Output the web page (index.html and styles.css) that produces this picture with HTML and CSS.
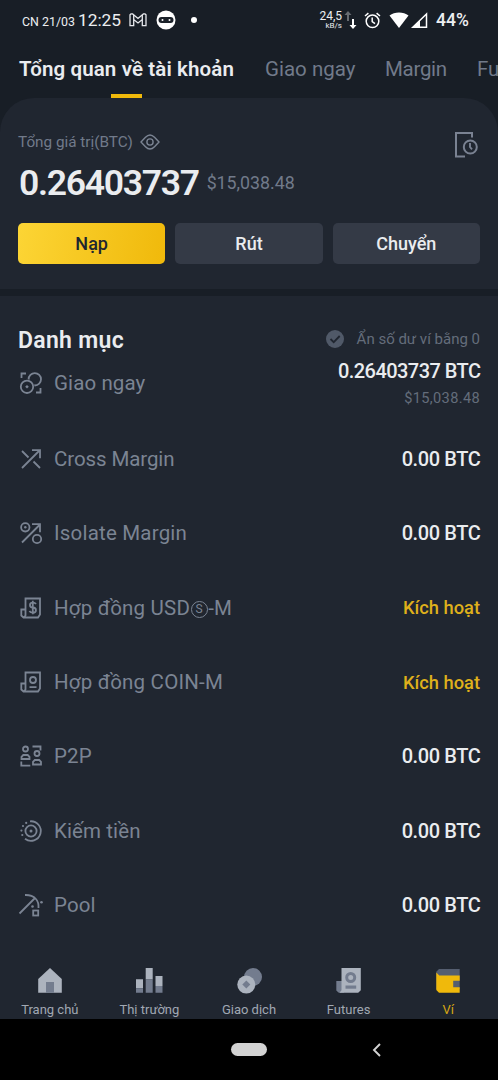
FILE: index.html
```
<!DOCTYPE html>
<html lang="vi">
<head>
<meta charset="utf-8">
<title>Ví</title>
<link rel="stylesheet" href="styles.css">
</head>
<body>
<div class="phone">
  <header class="status">
    <span class="status-date">CN 21/03</span>
    <span class="status-time">12:25</span>
    <svg class="status-mail" width="18" height="14" viewBox="0 0 18 14" fill="none" stroke="#e6e8ec" stroke-width="1.3"><path d="M1 12.7V1.8l1-.9h1.6L9 5.500l5.400-4.600H16l1 .9v10.900h-3.700V6.600L9 10 4.700 6.600v6.100z"/><path d="M4.700 2v4.600M13.300 2v4.600"/></svg>
    <svg class="status-mask" width="20" height="20" viewBox="0 0 20 20"><circle cx="10" cy="10" r="9.500" fill="#fff"/><rect x="2.500" y="7" width="15" height="6" rx="3" fill="#1b2129"/><circle cx="6.500" cy="10" r="1" fill="#fff"/><circle cx="13.500" cy="10" r="1" fill="#fff"/></svg>
    <span class="status-dot"></span>
    <span class="net"><b>24,5</b><i>kB/s</i></span>
    <svg class="status-arrows" width="13" height="19" viewBox="0 0 13 19"><path d="M4 0L.5 4H3v6h2V4h2.500z" fill="#676b70"/><path d="M8 8h2v6h2.500L9 18l-3.500-4H8z" fill="#fff"/></svg>
    <svg class="status-alarm" width="17" height="17" viewBox="0 0 17 17" fill="none" stroke="#fff" stroke-width="1.500"><circle cx="8.500" cy="9.300" r="6.300"/><path d="M8.200 5.500v4.200l2.800 2M1 4l3.400-2.900M16 4l-3.400-2.900"/></svg>
    <svg class="status-wifi" width="20" height="17" viewBox="0 0 20 17"><path d="M10 16L.5 3.500C5.500-.4 14.500-.4 19.500 3.500z" fill="#fff"/></svg>
    <svg class="status-cell" width="17" height="17" viewBox="0 0 17 17"><path d="M1.800 15.300L15.500 2v13.300z" fill="none" stroke="#fff" stroke-width="1.500"/><path d="M1 16L9 8v8z" fill="#fff"/></svg>
    <span class="battery">44%</span>
  </header>

  <nav class="tabs">
    <span class="tab tab-on">Tổng quan về tài khoản</span>
    <span class="tab tab-spot">Giao ngay</span>
    <span class="tab tab-margin">Margin</span>
    <span class="tab">Futures</span>
  </nav>

  <section class="summary">
    <div class="summary-top">
      <div class="summary-label"><span>Tổng giá trị(BTC)</span>
        <svg width="20" height="16" viewBox="0 0 20 16" fill="none" stroke="#7b8493" stroke-width="1.400"><path d="M1 8l4.500-4.700Q10-1.300 14.500 3.300L19 8l-4.500 4.700Q10 17.300 5.500 12.700z"/><circle cx="10" cy="8" r="3.100"/></svg>
      </div>
      <svg class="history" width="24" height="28" viewBox="0 0 24 28" fill="none" stroke="#7a8292"><path d="M18 6.500V2H2v23.500h9" stroke-width="2"/><circle cx="16.300" cy="16" r="6.500" stroke-width="2"/><path d="M16 12v4l2 2.300" stroke-width="1.900"/></svg>
    </div>
    <div class="balance"><strong>0.26403737</strong><span>$15,038.48</span></div>
    <div class="actions">
      <button class="btn btn-main">Nạp</button>
      <button class="btn">Rút</button>
      <button class="btn">Chuyển</button>
    </div>
  </section>

  <main class="portfolio">
    <div class="heading">
      <h2>Danh mục</h2>
      <div class="hide-zero">
        <svg width="18" height="18" viewBox="0 0 18 18"><circle cx="9" cy="9" r="9" fill="#505968"/><path d="M4.500 9l3.200 3.200 6-6.200" fill="none" stroke="#202630" stroke-width="1.800"/></svg>
        <span>Ẩn số dư ví bằng 0</span>
      </div>
    </div>

    <div class="row row-first">
      <svg class="icon" viewBox="0 0 22 22"><circle cx="14.800" cy="7.300" r="6.200"/><circle class="gap" cx="7" cy="14.800" r="7.500"/><circle cx="7" cy="14.800" r="6.200"/><path d="M1.500 6V1.500H6M16 20.500h4.500V16"/><path class="solid" d="M7 13l1.800 1.800L7 16.600l-1.800-1.800z"/></svg>
      <span class="name">Giao ngay</span>
      <div class="value"><strong class="amount">0.26403737 BTC</strong><small>$15,038.48</small></div>
    </div>
    <div class="row">
      <svg class="icon" viewBox="0 0 22 22"><path d="M2 20L20 2M12 2.200h8v8M2 3l6.500 6.500M13.500 13.500L20 20"/></svg>
      <span class="name name-cross">Cross Margin</span><div class="value"><strong>0.00 BTC</strong></div>
    </div>
    <div class="row">
      <svg class="icon" viewBox="0 0 22 22"><path d="M2 20.500L20 2.500M12 2.200h8v8"/><circle cx="5.300" cy="5.300" r="4.200"/><circle cx="17" cy="17" r="4.200"/><circle class="solid" cx="5.300" cy="5.300" r="1.200"/></svg>
      <span class="name name-isolate">Isolate Margin</span><div class="value"><strong>0.00 BTC</strong></div>
    </div>
    <div class="row">
      <svg class="icon" viewBox="0 0 22 22"><path d="M5.500 18.500V1.500h14.500v16l-2 3H3.500l-2.200-2v-6h4.200M5.500 12v6.500l-1.800 2"/><path d="M16 7q-1-1.400-3-1.400c-4 0-4 4.700-.2 4.900 4.200.2 4.200 5.100 0 5.100q-2.400 0-3.400-1.600M12.800 3.700v13.500"/></svg>
      <span class="name name-usd">Hợp đồng USD<span class="circled">S</span>-M</span><div class="value activate">Kích hoạt</div>
    </div>
    <div class="row">
      <svg class="icon" viewBox="0 0 22 22"><path d="M5.500 18.500V1.500h14.500v16l-2 3H3.500l-2.200-2v-6h4.200M5.500 12v6.500l-1.800 2M9.500 16.200h7"/><circle cx="13" cy="9" r="3"/></svg>
      <span class="name name-usd">Hợp đồng COIN-M</span><div class="value activate">Kích hoạt</div>
    </div>
    <div class="row">
      <svg class="icon" viewBox="0 0 22 22"><circle cx="5.500" cy="4" r="2.500"/><circle cx="17" cy="8.500" r="2.500"/><path d="M1.500 14v-2.200l1.800-1.800h4.400l1.800 1.800V14zM13 19.500v-2.700l1.800-1.800h4.400l1.800 1.800v2.700zM12.500 1.500h8V5.500M1.300 16.500v4.200h9"/></svg>
      <span class="name">P2P</span><div class="value"><strong>0.00 BTC</strong></div>
    </div>
    <div class="row">
      <svg class="icon" viewBox="0 0 22 22"><path d="M10 1.300A9.800 9.800 0 1 1 5 18.800"/><circle cx="11" cy="11" r="5.600"/><circle class="solid" cx="11" cy="11" r="1.500"/><g class="solid"><circle cx="6.200" cy="2.900" r="1.100"/><circle cx="3" cy="6" r="1.100"/><circle cx="1.400" cy="10.600" r="1.100"/><circle cx="2.300" cy="15" r="1.100"/></g></svg>
      <span class="name">Kiếm tiền</span><div class="value"><strong>0.00 BTC</strong></div>
    </div>
    <div class="row">
      <svg class="icon" viewBox="0 0 22 22"><path d="M-.5 19.500L15.500 3.500M5 1q7-.2 10.500 3.500t3 9.500"/><rect x="13.200" y="16.500" width="5" height="5"/><circle class="solid" cx="12.500" cy="12.500" r="1.300"/><circle class="solid" cx="21.500" cy="8.300" r="1.300"/></svg>
      <span class="name">Pool</span><div class="value"><strong>0.00 BTC</strong></div>
    </div>
  </main>

  <nav class="bottom">
    <div class="item"><svg width="28" height="28" viewBox="0 0 28 28"><path d="M14 2l11.800 11v13.800H2.200V13z" fill="#acb3be"/><path d="M10 16h8v10.800h-8z" fill="#737c8e"/></svg><span>Trang chủ</span></div>
    <div class="item"><svg width="28" height="28" viewBox="0 0 28 28"><path d="M1 13.200h7v9H1zM10.700 2h7v11.500h-7zM20.500 10h7v10h-7z" fill="#acb3be"/><path d="M1 22.200h7v4.600H1zM10.700 13.500h7v13.300h-7zM20.500 20h7v6.800h-7z" fill="#737c8e"/></svg><span>Thị trường</span></div>
    <div class="item"><svg width="28" height="28" viewBox="0 0 28 28"><circle cx="18" cy="11" r="9" fill="#737c8e"/><circle cx="11.300" cy="18.600" r="9" fill="#acb3be"/><path d="M11.300 14.600l4 4-4 4-4-4z" fill="#737c8e"/></svg><span>Giao dịch</span></div>
    <div class="item"><svg width="28" height="28" viewBox="0 0 28 28"><path d="M7 15H1.300v9.500l2.500 2.300H9z" fill="#737c8e"/><path d="M6.500 2h19.300v22.300l-2.600 2.500H4.500l2-2.500z" fill="#acb3be"/><circle cx="15.700" cy="11.500" r="4" fill="none" stroke="#737c8e" stroke-width="3"/><path d="M10.500 19.500h10.700v3.200H10.500z" fill="#737c8e"/></svg><span>Futures</span></div>
    <div class="item item-on"><svg width="28" height="28" viewBox="0 0 28 28"><path d="M2.300 5.700L5 3h20.700v20H2.300z" fill="#555e70"/><path d="M2.300 6.500l3 3h20.400v5.300h-6.500v6.400h6.500v5.600H5l-2.700-2.700z" fill="#f0b90b"/></svg><span>Ví</span></div>
  </nav>
  <footer class="system">
    <span class="pill"></span>
    <svg class="back" width="10" height="14" viewBox="0 0 10 14"><path d="M8 1L2 7l6 6" fill="none" stroke="#d3d3d3" stroke-width="1.900"/></svg>
  </footer>
</div>
</body>
</html>
```
FILE: styles.css
```
* { box-sizing: border-box; }
body { margin: 0; background: #000; font-family: Roboto, "Noto Sans", sans-serif; }
svg { display: block; flex: none; overflow: visible; }
.phone { width: 498px; height: 1080px; overflow: hidden; display: flex; flex-direction: column; background: #181e26; white-space: nowrap; }

.status { height: 40px; flex: none; display: flex; align-items: center; padding-left: 22px; color: #eceef1; }
.status-date { width: 56px; font-size: 12.400px; padding-top: 2px; }
.status-time { width: 51px; font-size: 17.300px; }
.status-mask { margin-left: 9px; }
.status-dot { width: 6px; height: 6px; margin-left: 15px; border-radius: 50%; background: #fff; }
.net { width: 23px; margin-left: 122px; display: flex; flex-direction: column; align-items: flex-end; padding-top: 1px; }
.net b { font-size: 12px; font-weight: 400; line-height: 11px; }
.net i { font-size: 8px; font-style: normal; line-height: 8px; }
.status-arrows { margin-left: 2px; }
.status-alarm { margin-left: 7px; }
.status-wifi { margin-left: 8px; }
.status-cell { margin-left: 2px; }
.battery { margin-left: 8px; font-size: 17.500px; font-weight: 500; }

.tabs { height: 58px; flex: none; display: flex; padding: 16px 0 0 19px; font-size: 20.500px; line-height: 26px; color: #717a8a; }
.tab { flex: none; }
.tab-on { position: relative; width: 246px; color: #eaecef; font-weight: 600; letter-spacing: .12px; }
.tab-on::after { content: ""; position: absolute; left: 92px; top: 38px; width: 31px; height: 4px; background: #f0b90b; z-index: 1; }
.tab-spot { width: 120px; }
.tab-margin { width: 92px; letter-spacing: -.3px; }

.summary { height: 191px; flex: none; padding: 34px 18px 0; background: #202630; border-radius: 34px 34px 0 0; }
.summary-top { height: 32px; display: flex; justify-content: space-between; }
.summary-label { height: 20px; display: flex; align-items: center; gap: 7px; font-size: 15.300px; color: #717a8a; }
.history { margin-right: 2px; margin-top: -1px; }
.balance { height: 38px; display: flex; align-items: center; gap: 8px; color: #717a8a; font-size: 17.800px; }
.balance strong { margin-left: 1px; color: #eaecef; font-size: 35.500px; font-weight: 600; letter-spacing: -1.300px; }
.balance span { padding-bottom: 1px; }
.actions { display: grid; grid-template-columns: repeat(3, 1fr); gap: 10px; margin-top: 21px; }
.btn { height: 41px; padding: 0; border: 0; border-radius: 5px; background: #343a46; color: #eaecef; font: 500 18px Roboto, sans-serif; }
.btn-main { background: linear-gradient(100deg, #fcd535, #f0b90b); color: #202630; }

.portfolio { height: 665px; flex: none; margin-top: 7px; padding: 30px 18px 0; background: #202630; }
.heading { height: 28px; display: flex; justify-content: space-between; align-items: center; }
.heading h2 { margin: 0; font-size: 23px; font-weight: 600; letter-spacing: .3px; color: #eaecef; }
.hide-zero { display: flex; align-items: center; gap: 13px; margin-top: -2px; font-size: 15px; color: #646d7b; }
.row { height: 74.300px; display: flex; align-items: center; color: #7b8493; }
.row-first { height: 68px; padding-bottom: 10px; }
.row-first .value { padding-top: 4px; }
.icon { width: 22px; height: 22px; margin: 0 12px 0 2px; fill: none; stroke: #7b8493; stroke-width: 1.800; }
.icon .solid { fill: #7b8493; stroke: none; }
.icon .gap { fill: #202630; stroke: none; }
.name { font-size: 20.500px; letter-spacing: .1px; }
.name-cross { letter-spacing: -.1px; }
.name-isolate { letter-spacing: .2px; }
.name-usd { letter-spacing: .2px; }
.value { margin-left: auto; display: flex; flex-direction: column; align-items: flex-end; font-size: 18.300px; color: #eaecef; }
.value strong { font-size: 20px; line-height: 26px; font-weight: 500; letter-spacing: -.4px; margin-right: -.4px; }
.value .amount { letter-spacing: -.55px; }
.value small { font-size: 14.600px; line-height: 28px; letter-spacing: .35px; color: #646d7b; }
.value.activate { color: #dfb01b; font-weight: 500; }
.circled { display: inline-block; width: 17px; height: 17px; margin: 0 .500px; border: 1.200px solid #7b8493; border-radius: 50%; font-size: 12px; line-height: 15px; letter-spacing: 0; text-align: center; vertical-align: 2px; }

.bottom { height: 58px; flex: none; display: grid; grid-template-columns: repeat(5, 1fr); padding-top: 5px; background: #202630; color: #a1a8b3; font-size: 13px; }
.item { display: flex; flex-direction: column; align-items: center; gap: 7px; line-height: 18px; }
.item-on { color: #d6a614; }
.system { flex: 1; position: relative; display: flex; justify-content: center; align-items: center; background: #000; }
.pill { width: 36px; height: 13px; border-radius: 7px; background: #d3d3d3; }
.back { position: absolute; left: 372px; top: 24px; }
```
